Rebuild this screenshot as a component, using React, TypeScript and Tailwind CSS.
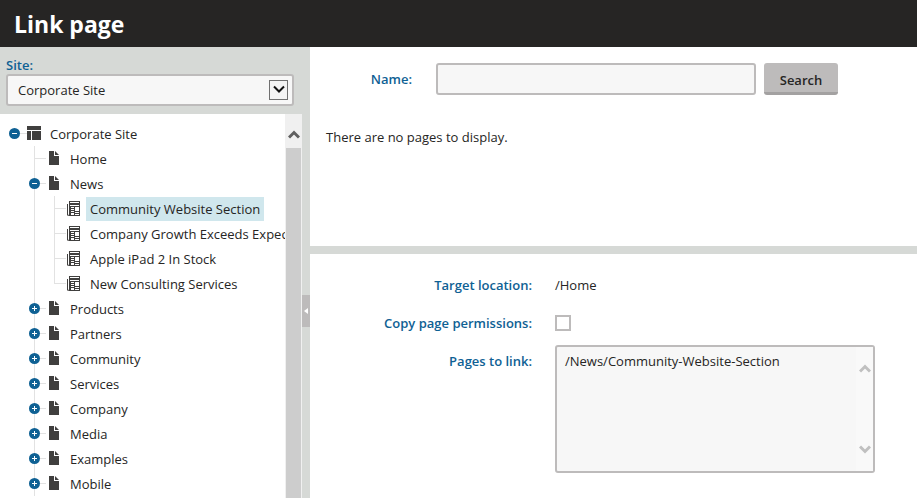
import { useState } from "react";

type NodeKind = "site" | "page" | "article";
type Toggle = "open" | "closed" | "none";

interface TreeRow {
  label: string;
  kind: NodeKind;
  level: 0 | 1 | 2;
  toggle: Toggle;
  last?: boolean;
}

const rows: TreeRow[] = [
  { label: "Corporate Site", kind: "site", level: 0, toggle: "open" },
  { label: "Home", kind: "page", level: 1, toggle: "none" },
  { label: "News", kind: "page", level: 1, toggle: "open" },
  { label: "Community Website Section", kind: "article", level: 2, toggle: "none" },
  { label: "Company Growth Exceeds Expectations", kind: "article", level: 2, toggle: "none" },
  { label: "Apple iPad 2 In Stock", kind: "article", level: 2, toggle: "none" },
  { label: "New Consulting Services", kind: "article", level: 2, toggle: "none", last: true },
  { label: "Products", kind: "page", level: 1, toggle: "closed" },
  { label: "Partners", kind: "page", level: 1, toggle: "closed" },
  { label: "Community", kind: "page", level: 1, toggle: "closed" },
  { label: "Services", kind: "page", level: 1, toggle: "closed" },
  { label: "Company", kind: "page", level: 1, toggle: "closed" },
  { label: "Media", kind: "page", level: 1, toggle: "closed" },
  { label: "Examples", kind: "page", level: 1, toggle: "closed" },
  { label: "Mobile", kind: "page", level: 1, toggle: "closed" },
];

function NodeIcon({ kind }: { kind: NodeKind }) {
  if (kind === "site") {
    return (
      <svg width="14" height="14" viewBox="0 0 14 14" fill="#403f3e" aria-hidden="true">
        <path d="M0 0h14v4H0zM0 5h4v9H0zM5 5h9v9H5z" />
      </svg>
    );
  }
  if (kind === "page") {
    return (
      <svg width="10" height="14" viewBox="0 0 10 14" fill="#403f3e" aria-hidden="true">
        <path d="M0 0h5v5h5v9H0z" />
        <path d="M6 0l4 4H6z" />
      </svg>
    );
  }
  return (
    <svg width="14" height="15" viewBox="0 0 14 15" aria-hidden="true">
      <path d="M0 3h1v10l1 2h-1l-1-1z" fill="#403f3e" />
      <path
        fillRule="evenodd"
        fill="#403f3e"
        d="M2 0h11v15H2zM3 1v1h9V1zM3 4v1h9V4zM4 6v1h3V6zM8 6v4h4V6zM4 8v1h3V8zM4 10v1h3v-1zM4 12v2h3v-2zM8 11v1h4v-1zM8 13v1h4v-1z"
      />
    </svg>
  );
}

function ToggleCell({ row }: { row: TreeRow }) {
  const { level, toggle, last } = row;
  return (
    <svg className="shrink-0 overflow-visible" width="20" height="25" viewBox="0 0 20 25" aria-hidden="true">
      {level > 0 && <path d={last ? "M10.500 0V13" : "M10.500 0V25"} stroke="#e2e2e2" />}
      <path d={level === 0 ? "M10 12.500H23" : "M10 12.500H22"} stroke="#e2e2e2" />
      {toggle !== "none" && (
        <>
          <circle cx="10.500" cy="12.500" r="5.500" fill="#0f6194" />
          <path d={toggle === "open" ? "M8 12.500H13" : "M8 12.500H13M10.500 10V15"} stroke="#fff" />
        </>
      )}
    </svg>
  );
}

function Chevron({ up, color, thin }: { up?: boolean; color: string; thin?: boolean }) {
  return (
    <svg
      width="12"
      height="9"
      viewBox="0 0 12 9"
      fill="none"
      stroke={color}
      strokeWidth={thin ? 2 : 3}
      aria-hidden="true"
    >
      <path d={up ? "M1 7.500L6 2.500L11 7.500" : "M1 1.500L6 6.500L11 1.500"} />
    </svg>
  );
}

function PageTree() {
  const [selected, setSelected] = useState("Community Website Section");
  return (
    <ul className="min-w-0 flex-1 overflow-hidden pt-[7px] pl-1">
      {rows.map((row) => (
        <li key={row.label} className="flex h-[25px] items-center">
          {row.level > 0 && <span className="w-5 shrink-0" />}
          {row.level > 1 && (
            <span className="flex h-full w-5 shrink-0 pl-2.5">
              <span className="w-px bg-[#e2e2e2]" />
            </span>
          )}
          <ToggleCell row={row} />
          <span className="mr-0.5 flex h-full w-5 shrink-0 items-start justify-center pt-[5px]">
            <NodeIcon kind={row.kind} />
          </span>
          <button
            type="button"
            onClick={() => setSelected(row.label)}
            className={
              row.label === selected
                ? "h-6 shrink-0 self-end bg-[#d0e7ed] px-1 pt-0.5 whitespace-nowrap"
                : "h-6 shrink-0 self-end px-1 pt-0.5 whitespace-nowrap"
            }
          >
            {row.label}
          </button>
        </li>
      ))}
    </ul>
  );
}

export default function App() {
  return (
    <div className="flex h-screen flex-col overflow-hidden bg-white font-['Open_Sans','Noto_Sans',sans-serif] text-[13px] text-[#262524]">
      <header className="flex h-[47px] shrink-0 items-center bg-[#262524] px-3.5 pt-0.5">
        <h1 className="text-[23px] font-bold text-white">Link page</h1>
      </header>

      <div className="flex min-h-0 flex-1">
        <aside className="flex w-[302px] shrink-0 flex-col bg-[#d6d9d6]">
          <div className="px-1.5 pt-[9px] pb-2">
            <label htmlFor="site" className="block leading-[18px] font-semibold text-[#0f6194]">
              Site:
            </label>
            <div className="relative w-[288px]">
              <select
                id="site"
                className="block h-8 w-full appearance-none rounded-[3px] border-2 border-[#bdbbbb] bg-[#f7f7f7] px-2.5 pt-0.5"
              >
                <option>Corporate Site</option>
              </select>
              <span className="pointer-events-none absolute top-1.5 right-1.5 flex h-5 w-[19px] items-center justify-center border border-[#707070] bg-[#f3f3f3] pb-0.5">
                <Chevron thin color="#111" />
              </span>
            </div>
          </div>
          <div className="flex min-h-0 flex-1 bg-white">
            <PageTree />
            <div className="flex w-[17px] shrink-0 flex-col bg-[#f0f0f0] px-px">
              <div className="flex h-[34px] shrink-0 items-end justify-center pb-[9px]">
                <Chevron up color="#606060" />
              </div>
              <div className="flex-1 bg-[#cdcdcd]" />
            </div>
          </div>
        </aside>

        <div className="flex w-2 shrink-0 flex-col bg-[#d6d9d6] pt-[248px]">
          <button
            type="button"
            aria-label="Collapse tree"
            className="flex h-8 w-2 items-center justify-center bg-[#bdbbbb]"
          >
            <svg width="4" height="6" viewBox="0 0 4 6" fill="#fff" aria-hidden="true">
              <path d="M4 0v6L0 3z" />
            </svg>
          </button>
        </div>

        <main className="flex min-w-0 flex-1 flex-col">
          <section className="h-[199px] shrink-0 px-4 pt-4">
            <form className="flex items-center" onSubmit={(e) => e.preventDefault()}>
              <label htmlFor="name" className="w-[86px] shrink-0 pt-0.5 text-right font-semibold text-[#0f6194]">
                Name:
              </label>
              <input
                id="name"
                type="text"
                className="ml-6 h-8 w-80 rounded-[3px] border-2 border-[#bdbbbb] bg-[#f7f7f7] px-2"
              />
              <button
                type="submit"
                className="ml-2 h-8 w-[74px] rounded-[3px] border-b-3 border-[#a3a1a1] bg-[#bdbbbb] pt-1.5 font-semibold"
              >
                Search
              </button>
            </form>
            <p className="mt-8 leading-5">There are no pages to display.</p>
          </section>

          <div className="h-2 shrink-0 bg-[#d6d9d6]" />

          <section className="grid grid-cols-[206px_320px] content-start gap-x-[23px] gap-y-1.5 px-4 pt-[15px] leading-8">
            <span className="text-right font-semibold text-[#0f6194]">Target location:</span>
            <span>/Home</span>
            <label htmlFor="permissions" className="text-right font-semibold text-[#0f6194]">
              Copy page permissions:
            </label>
            <span className="flex items-center">
              <input
                id="permissions"
                type="checkbox"
                className="size-4 appearance-none border-2 border-[#bdbbbb] bg-white checked:bg-[#0f6194]"
              />
            </span>
            <label htmlFor="pages" className="text-right font-semibold text-[#0f6194]">
              Pages to link:
            </label>
            <div className="relative">
              <textarea
                id="pages"
                readOnly
                defaultValue="/News/Community-Website-Section"
                className="block h-32 w-full resize-none rounded-[3px] border-2 border-[#bdbbbb] bg-[#f7f7f7] py-1 pr-5 pl-2 leading-5"
              />
              <span className="pointer-events-none absolute inset-y-0.5 right-0.5 flex w-[17px] flex-col items-center justify-between bg-[#f9f9f9] py-[17px]">
                <Chevron up color="#c0c0c0" />
                <Chevron color="#c0c0c0" />
              </span>
            </div>
          </section>
        </main>
      </div>
    </div>
  );
}
